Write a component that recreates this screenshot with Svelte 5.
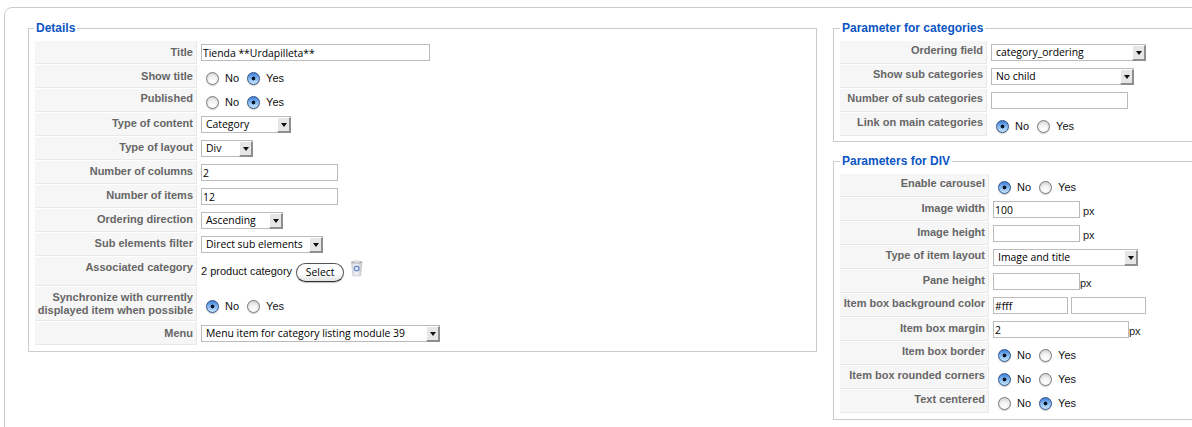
<script>
  const left = [
    { label: 'Title', pad: 11, type: 'text', w: 229, value: 'Tienda **Urdapilleta**' },
    { label: 'Show title', pad: 11, type: 'radio', yes: true },
    { label: 'Published', pad: 9, type: 'radio', yes: true },
    { label: 'Type of content', pad: 10, type: 'select', w: 90, value: 'Category' },
    { label: 'Type of layout', pad: 10, type: 'select', w: 52, value: 'Div' },
    { label: 'Number of columns', pad: 10, type: 'text', w: 137, value: '2' },
    { label: 'Number of items', pad: 10, type: 'text', w: 137, value: '12' },
    { label: 'Ordering direction', pad: 10, type: 'select', w: 82, value: 'Ascending' },
    { label: 'Sub elements filter', pad: 10, type: 'select', w: 122, value: 'Direct sub elements' },
    { label: 'Associated category', pad: 10, type: 'assoc' },
    { label: 'Synchronize with currently displayed item when possible', pad: 10, type: 'radio', yes: false, tall: true },
    { label: 'Menu', pad: 11, type: 'select', w: 239, value: 'Menu item for category listing module 39' }
  ];
  const cats = [
    { label: 'Ordering field', pad: 9, type: 'select', w: 155, value: 'category_ordering' },
    { label: 'Show sub categories', pad: 9, type: 'select', w: 143, value: 'No child' },
    { label: 'Number of sub categories', pad: 9, type: 'text', w: 137, value: '' },
    { label: 'Link on main categories', pad: 9, type: 'radio', yes: false }
  ];
  const div = [
    { label: 'Enable carousel', pad: 9, type: 'radio', yes: false },
    { label: 'Image width', pad: 10, type: 'text', w: 87, value: '100', suffix: 'px', gap: 3 },
    { label: 'Image height', pad: 10, type: 'text', w: 87, value: '', suffix: 'px', gap: 3 },
    { label: 'Type of item layout', pad: 9, type: 'select', w: 145, value: 'Image and title' },
    { label: 'Pane height', pad: 10, type: 'text', w: 87, value: '', suffix: 'px', gap: 0 },
    { label: 'Item box background color', pad: 9, type: 'color', value: '#fff' },
    { label: 'Item box margin', pad: 10, type: 'text', w: 136, value: '2', suffix: 'px', gap: 0 },
    { label: 'Item box border', pad: 9, type: 'radio', yes: false },
    { label: 'Item box rounded corners', pad: 9, type: 'radio', yes: false },
    { label: 'Text centered', pad: 9, type: 'radio', yes: true }
  ];
  const groups = [
    { title: 'Parameter for categories', rows: cats, keyW: 147, cls: 'cats' },
    { title: 'Parameters for DIV', rows: div, keyW: 149, cls: 'divs' }
  ];
</script>

{#snippet radio(name, yes)}
  <div class="radios">
    <input type="radio" {name} checked={!yes} />
    <span class="opt">No</span>
    <input type="radio" {name} checked={yes} />
    <span class="opt">Yes</span>
  </div>
{/snippet}

{#snippet field(w, value)}
  <input class="text" type="text" style="width:{w}px" {value} />
{/snippet}

{#snippet table(rows, keyW, prefix)}
  <table>
    <tbody>
      {#each rows as row, i}
        <tr>
          <td class="key pad{row.pad}" class:tall={row.tall} class:assoc={row.type === 'assoc'} style="width:{keyW}px">{row.label}</td>
          <td class="val" class:val-tall={row.tall}>
            {#if row.type === 'text'}
              <div class="line">
                {@render field(row.w, row.value)}
                {#if row.suffix}<span class="px" style="margin-left:{row.gap}px">{row.suffix}</span>{/if}
              </div>
            {:else if row.type === 'select'}
              <div class="select" style="width:{row.w}px">
                <span class="sel-text">{row.value}</span>
                <span class="arrow"></span>
              </div>
            {:else if row.type === 'radio'}
              {@render radio(prefix + i, row.yes)}
            {:else if row.type === 'color'}
              <div class="line colors">
                {@render field(75, row.value)}
                {@render field(75, '')}
              </div>
            {:else if row.type === 'assoc'}
              <div class="assoc-line">
                <span class="opt">2 product category</span>
                <button type="button" class="pill">Select</button>
                <svg class="trash" width="13" height="18" viewBox="0 0 13 18" aria-hidden="true">
                  <defs>
                    <linearGradient id="can" x1="0" x2="1" y1="0" y2="0">
                      <stop offset="0" stop-color="#d4d8dc" />
                      <stop offset="0.5" stop-color="#f4f5f6" />
                      <stop offset="1" stop-color="#bfc3c7" />
                    </linearGradient>
                  </defs>
                  <path d="M1.5 3.5 L3 17 H10.5 L12 3.5 Z" fill="url(#can)" stroke="#c4c7ca" stroke-width="0.7" />
                  <ellipse cx="6.7" cy="3" rx="5.6" ry="1.6" fill="#a9adb1" />
                  <ellipse cx="6.7" cy="2.7" rx="4.2" ry="0.8" fill="#e8e9ea" />
                  <circle cx="6.7" cy="9.5" r="2.3" fill="none" stroke="#6f8fd0" stroke-width="1.4" />
                </svg>
              </div>
            {/if}
          </td>
        </tr>
      {/each}
    </tbody>
  </table>
{/snippet}

<div class="page">
  <div class="panel">
    <fieldset class="details">
      <legend>Details</legend>
      {@render table(left, 162, 'l')}
    </fieldset>
    <div class="side">
      {#each groups as g}
        <fieldset class={g.cls}>
          <legend>{g.title}</legend>
          {@render table(g.rows, g.keyW, g.cls)}
        </fieldset>
      {/each}
    </div>
  </div>
</div>

<style>
  :global(body) {
    margin: 0;
    background: #fff;
  }
  .page {
    width: 1192px;
    height: 427px;
    overflow: hidden;
    padding: 7px 0 0 4px;
    box-sizing: border-box;
  }
  .panel {
    width: 1300px;
    height: 500px;
    box-sizing: border-box;
    border: 1px solid #ccc;
    border-radius: 8px 0 0 0;
    display: flex;
    align-items: flex-start;
    padding: 13px 0 0 23px;
    font-family: "Liberation Sans", Arial, sans-serif;
  }
  fieldset {
    margin: 0;
    border: 1px solid #ccc;
    padding: 0 5px 4px;
    box-sizing: border-box;
    min-width: 0;
  }
  .details {
    width: 789px;
    height: 331px;
  }
  .side {
    margin-left: 16px;
    width: 440px;
    display: flex;
    flex-direction: column;
    gap: 12px;
  }
  .side legend {
    margin-left: 1px;
  }
  .cats {
    height: 121px;
  }
  .divs {
    height: 266px;
  }
  legend {
    margin-left: 0;
    padding: 0 2px;
    color: #0b55c4;
    font: bold 12px/14px "Liberation Sans", Arial, sans-serif;
  }
  table {
    border-collapse: separate;
    border-spacing: 1px;
    margin-top: 5px;
  }
  td {
    padding: 0;
    vertical-align: top;
    font-size: 11px;
  }
  .key {
    box-sizing: border-box;
    height: 23px;
    background: #f6f6f6;
    border-bottom: 1px solid #e9e9e9;
    border-right: 1px solid #e9e9e9;
    color: #666;
    font-weight: bold;
    text-align: right;
    line-height: 13px;
    padding-right: 3px;
  }
  .pad9 { padding-top: 3px; }
  .pad10 { padding-top: 4px; }
  .pad11 { padding-top: 5px; }
  .key.assoc { height: 29px; }
  .key.tall { height: 34px; padding-top: 4px; }
  .val {
    padding: 3px 3px 0;
  }
  .val-tall {
    padding-top: 9px;
  }
  .line {
    display: flex;
    align-items: center;
  }
  .colors {
    gap: 3px;
  }
  .text {
    box-sizing: border-box;
    height: 17px;
    margin: 0;
    padding: 0 1px;
    border: 1px solid #bbb;
    background: #fff;
    color: #000;
    border-radius: 0;
    font: 10.4px/15px "Open Sans", sans-serif;
    outline: none;
  }
  .px {
    font-size: 11px;
    color: #222;
    margin-top: 2px;
  }
  .select {
    box-sizing: border-box;
    height: 17px;
    display: flex;
    border: 1px solid #bbb;
    border-right: 0;
    background: #fff;
  }
  .sel-text {
    flex: 1;
    min-width: 0;
    padding-left: 4px;
    white-space: nowrap;
    overflow: hidden;
    font: 10.4px/14px "Open Sans", sans-serif;
    color: #000;
  }
  .arrow {
    flex: none;
    box-sizing: border-box;
    width: 14px;
    margin-bottom: -1px;
    background: #e6e6e6;
    border-right: 2px solid #8e8e8e;
    border-bottom: 2px solid #8e8e8e;
    border-top: 1px solid #fff;
    border-left: 1px solid #fff;
    display: flex;
    align-items: center;
    justify-content: center;
  }
  .arrow::after {
    content: "";
    width: 0;
    height: 0;
    border-left: 3px solid transparent;
    border-right: 3px solid transparent;
    border-top: 4px solid #111;
  }
  .radios {
    display: flex;
    align-items: center;
    height: 20px;
    padding: 1px 0 0 5px;
    box-sizing: border-box;
  }
  input[type="radio"] {
    appearance: none;
    -webkit-appearance: none;
    box-sizing: border-box;
    flex: none;
    width: 13px;
    height: 13px;
    margin: 0;
    border-radius: 50%;
    border: 1px solid #7a7a7a;
    background: radial-gradient(circle at 50% 75%, #fff 0%, #f2f2f2 45%, #c4c4c4 100%);
    box-shadow: 0 1px 1px rgba(0, 0, 0, 0.2);
  }
  input[type="radio"]:checked {
    border-color: #2f5288;
    background:
      radial-gradient(circle at 50% 50%, #0b1626 0, #0b1626 1.7px, transparent 2.2px),
      linear-gradient(#3f80d6 0%, #8fbdf0 55%, #c4e2fb 100%);
  }
  .opt {
    font-size: 11px;
    line-height: 13px;
    color: #111;
  }
  .radios .opt:nth-of-type(1) {
    margin: 0 8px 0 6px;
  }
  .radios .opt:nth-of-type(2) {
    margin-left: 6px;
  }
  .assoc-line {
    display: flex;
    align-items: flex-start;
    padding-top: 2px;
  }
  .assoc-line .opt {
    margin-top: 3px;
    margin-right: 4px;
  }
  .pill {
    box-sizing: border-box;
    width: 48px;
    height: 19px;
    margin: 1px 0 0 0;
    padding: 0;
    border: 1px solid #555;
    border-bottom-color: #333;
    border-radius: 10px;
    background: linear-gradient(#fff 55%, #e2e2e2);
    box-shadow: 0 1px 1px rgba(0, 0, 0, 0.25);
    font: 10.4px/15px "Open Sans", sans-serif;
    color: #000;
  }
  .trash {
    margin: -3px 0 0 6px;
  }
</style>
